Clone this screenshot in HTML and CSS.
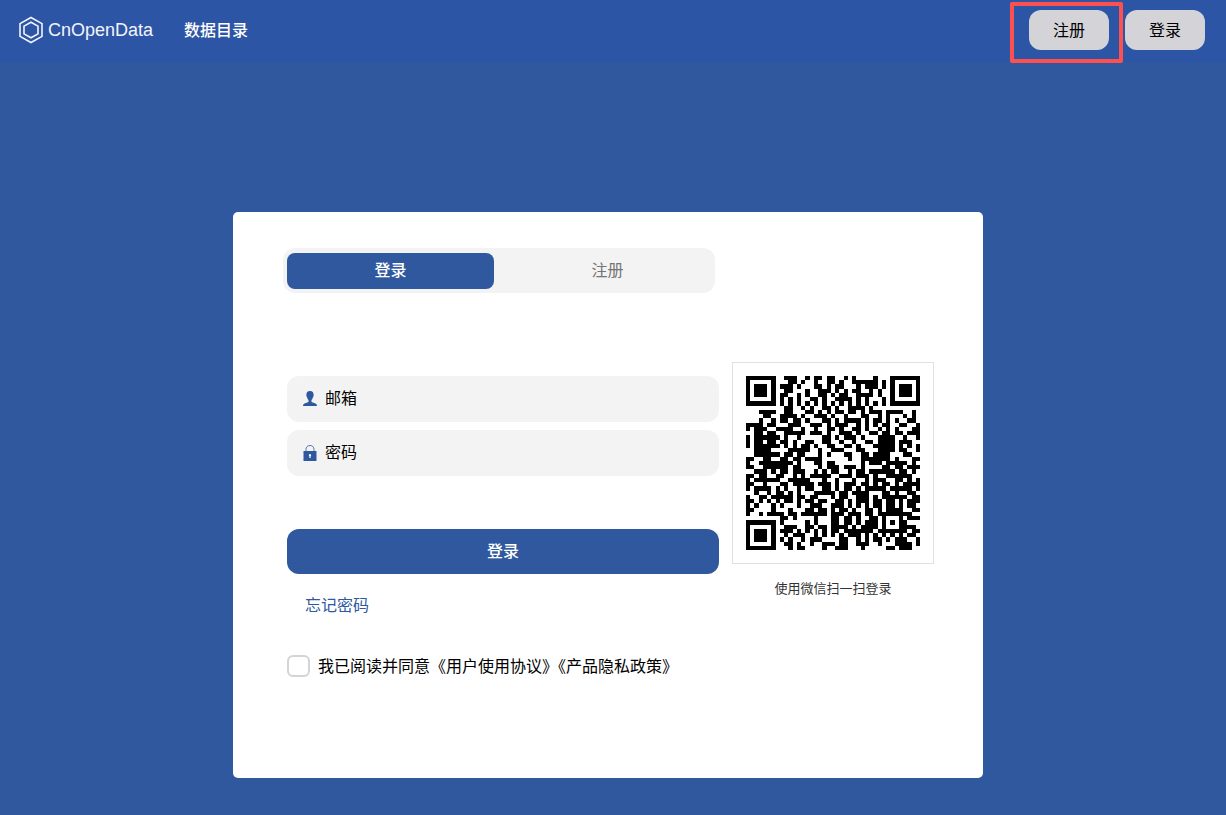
FILE: index.html
```html
<!DOCTYPE html>
<html lang="zh-CN">
<head>
<meta charset="utf-8">
<title>CnOpenData</title>
<link rel="stylesheet" href="styles.css">
</head>
<body>
<header class="topbar">
  <a class="logo" href="#">
    <svg class="logo-mark" viewBox="0 0 26 28" fill="none" stroke="#f1f4fa" stroke-width="1.6" aria-hidden="true">
      <path d="M13 1.5 24 7.6V20.4L13 26.5 2 20.4V7.6Z"/>
      <path d="M13 6.2 20 10.1V17.9L13 21.8 6 17.9V10.1Z"/>
    </svg>
    <span>CnOpenData</span>
  </a>
  <nav class="nav"><a href="#">数据目录</a></nav>
  <div class="actions">
    <div class="marked"><button class="pill" type="button">注册</button></div>
    <button class="pill" type="button">登录</button>
  </div>
</header>
<main class="page">
  <section class="card">
    <div class="tabs">
      <button class="tab tab-active" type="button">登录</button>
      <button class="tab" type="button">注册</button>
    </div>
    <div class="columns">
      <form class="form">
        <label class="field">
          <svg class="field-icon" viewBox="0 0 14 16" fill="#2f589f" aria-hidden="true"><path d="M7 0C4.5 0 3.3 1.600 3.400 4 3.200 4.600 3.500 5.700 4 6 4.300 7.500 5 8.600 5.500 9V11L1.500 12.500C.5 13 0 14 0 15H14C14 14 13.500 13 12.500 12.500L8.500 11V9C9 8.600 9.700 7.500 10 6 10.500 5.700 10.800 4.600 10.600 4 10.700 1.600 9.500 0 7 0Z"/></svg>
          <input type="text" placeholder="邮箱" aria-label="邮箱">
        </label>
        <label class="field">
          <svg class="field-icon" viewBox="0 0 14 16" aria-hidden="true"><path d="M3 7V4.500C3 2 4.500.5 7 .5S11 2 11 4.500V7" fill="none" stroke="#2f589f" stroke-width=".8"/><path d="M.5 6H13.500V16H.5Z" fill="#2f589f"/><path d="M7 9A1.200 1.200 0 0 1 7.600 11.200V13H6.400V11.200A1.200 1.200 0 0 1 7 9Z" fill="#fff"/></svg>
          <input type="password" placeholder="密码" aria-label="密码">
        </label>
        <button class="submit" type="button">登录</button>
        <a class="forgot" href="#">忘记密码</a>
        <label class="agree"><input type="checkbox"><span>我已阅读并同意《用户使用协议》《产品隐私政策》</span></label>
      </form>
      <aside class="scan">
        <div class="qr-frame"><svg class="qr" viewBox="0 0 41 41" shape-rendering="crispEdges" role="img" aria-label="微信登录二维码"><path id="modules" fill="#000"/></svg></div>
        <p class="caption">使用微信扫一扫登录</p>
      </aside>
    </div>
  </section>
</main>
<script src="qr.js"></script>
</body>
</html>
```
FILE: styles.css
```css
* {
  box-sizing: border-box;
}

body {
  margin: 0;
  min-height: 100vh;
  background: #2f589f;
  color: #000;
  font: 16px/24px "Noto Sans CJK SC", sans-serif;
}

button,
input {
  font: inherit;
}

button {
  border: 0;
  cursor: pointer;
}

a {
  text-decoration: none;
}

.topbar {
  display: flex;
  align-items: center;
  height: 62px;
  padding: 0 21px 2px 18px;
  background: #2d55a5;
}

.logo {
  display: flex;
  align-items: center;
  gap: 4px;
  color: #f1f4fa;
  font: 18px/28px "Liberation Sans Narrow", "Liberation Sans", sans-serif;
}

.logo-mark {
  width: 26px;
  height: 28px;
}

.nav {
  margin-left: 31px;
  padding-bottom: 2px;
}

.nav a {
  color: #fff;
  font-weight: 500;
}

.actions {
  display: flex;
  gap: 16px;
  margin-left: auto;
}

.marked {
  position: relative;
}

.marked::after {
  content: "";
  position: absolute;
  inset: -8px -14px -13px -19px;
  border: 4px solid #ff5050;
  border-radius: 2px;
  pointer-events: none;
}

.pill {
  width: 80px;
  height: 40px;
  padding: 0 0 2px;
  border-radius: 12px;
  background: #d3d3d8;
  color: #000;
}

.page {
  display: flex;
  justify-content: center;
  padding: 150px 10px 37px 0;
}

.card {
  width: 750px;
  padding: 36px 49px 99px 50px;
  border-radius: 5px;
  background: #fff;
}

.tabs {
  display: flex;
  gap: 10px;
  width: 432px;
  padding: 5px 4px 4px;
  border-radius: 12px;
  background: #f3f3f3;
}

.tab {
  flex: 1;
  height: 36px;
  padding: 0 0 4px;
  border-radius: 8px;
  background: none;
  color: #757575;
}

.tab-active {
  background: #2f589f;
  color: #fff;
  font-weight: 500;
}

.columns {
  display: flex;
  gap: 13px;
  padding: 69px 0 0 4px;
}

.form {
  display: flex;
  flex: 1;
  flex-direction: column;
  align-items: flex-start;
  padding-top: 14px;
}

.field {
  display: flex;
  align-items: center;
  gap: 8px;
  width: 100%;
  height: 46px;
  margin-bottom: 8px;
  padding: 0 16px;
  border-radius: 12px;
  background: #f3f3f3;
}

.field-icon {
  width: 14px;
  height: 16px;
}

.field input {
  flex: 1;
  min-width: 0;
  padding: 0 0 4px;
  border: 0;
  outline: 0;
  background: none;
}

.field input::placeholder {
  color: #000;
  opacity: 1;
}

.submit {
  width: 100%;
  height: 45px;
  margin-top: 45px;
  padding: 0 0 4px;
  border-radius: 12px;
  background: #2f589f;
  color: #fff;
  font-weight: 500;
}

.forgot {
  margin: 18px 0 0 18px;
  color: #2f589f;
}

.agree {
  display: flex;
  align-items: center;
  gap: 8px;
  margin-top: 37px;
  white-space: nowrap;
}

.agree span {
  padding-bottom: 2px;
}

.agree input {
  width: 23px;
  height: 22px;
  margin: 0;
  border: 2px solid #d3d3d8;
  border-radius: 6px;
  appearance: none;
  background: #fff;
}

.agree input:checked {
  background: #2f589f;
}

.scan {
  width: 202px;
}

.qr-frame {
  padding: 13px;
  border: 1px solid #e1e1e1;
}

.qr {
  display: block;
  width: 100%;
}

.caption {
  margin: 12px 0 0;
  color: #333;
  font-size: 13px;
  text-align: center;
}
```
FILE: qr.js
```js
const rows = [
  "#######..###..#.##.##..#.#....#..#######",
  "#.....#...##.#..#..##.#..######.##.#.....#",
  "#.###.#.###.#...##.#.##...#.###.#.#.###.#",
  "#.###.#..##...#..###.#.#.##..#.#..#.###.#",
  "#.###.#.##..#.#..##.#.##..####.#..#.###.#",
  "#.....#.#.#.#..##.#..####.#.#...#.#.....#",
  "#######.#.#.#.#.#.#.#.#.#.#.#.#.#.#######",
  ".........##..#.#..##.#..####.#...........",
  "...####..##...##.#.#.##.##.#.###.####..#.",
  "....##..####.#..###.#..#...##..#.#...#.#.",
  "...#..#.##.##.#...##.#.####.#.##.#.#..##.",
  "####.##...###..###.#.###..#.#.#.##..##..#",
  "#.###..####..#..#..##.#..##.#..#.#.#...##",
  "..##.##..#####.###.#..###.#..##.##.##.###",
  "#.######.#..#.....##.#.###.#...####..#..#",
  "#.##.##.##.#..##..##..#..#..##.####.###..",
  "#.######.#.#.##.#..##..##.#...#####.#.#.#",
  "..####....#####..#..###...##...####.##..#",
  "..######.##.##...#.#...##..##.####...##..",
  "##..##..##.##.####......#..#######.#...##",
  "#..########.#...##.##......#.###.#####.#.",
  "##..######.##....#.###.###.#....##.##.###",
  "..###.#.##.###..#.#.##..#.##.######.##.#.",
  "##.##..##..#.#.#####..###.###.#..######..",
  "#.######..#####...#..#...#..#.###..##.#.#",
  "##..#...##.#####.###.#.###.##.#.##.#.####",
  "#.####.#.#..#.##..##.#.##.#.#####.#####.#",
  "..#..#.##.#.#...#####.##.####...##.#..##.",
  "#..##.#####.##.##...#.##..###.#.######.##",
  "##.#.#.#.##.#.##.##..##.#.###.##.##.#.###",
  "#.#...#.#...#..###..###.#.#.#.##.##.#.##.",
  "##....#...#...##.##.#.##.#..##.#.####..##",
  "#..#.####.##.######.###.###.##.##.##.##..",
  "........##.#....#...##.##.#..##.#...#.###",
  "#######.#.....#.#...##.##.#.###.#.#.##..",
  "#.....#..###..##.##.####.#.####.#...####.",
  "#.###.#.###.#.#.#.#.##.#######.#######.##",
  "#.###.#..#.###..#.#.#.#.###.#.#.#.#.#.##.",
  "#.###.#.#.#..#.###....##..#.#.##.#.###..#",
  "#.....#..##.#..#..###.##..###..#...####.#",
  "#######...#.##....#..###...#.....##.###.."
];
const grid = rows.map(row => row.slice(0, 41).padEnd(41, ".").split("").map(c => c === "#"));

// Square ring pattern around a centre module.
function ring(cx, cy, size, filled) {
  for (let y = -size; y <= size; y++) {
    for (let x = -size; x <= size; x++) {
      const row = grid[cy + y];
      if (!row || cx + x < 0 || cx + x > 40) continue;
      row[cx + x] = filled(Math.max(Math.abs(x), Math.abs(y)));
    }
  }
}

[[3, 3], [37, 3], [3, 37]].forEach(([x, y]) => ring(x, y, 4, d => d < 2 || d === 3));
ring(34, 34, 2, d => d !== 1);

let path = "";
grid.forEach((row, y) => row.forEach((on, x) => {
  if (on) path += `M${x} ${y}h1v1h-1z`;
}));
document.getElementById("modules").setAttribute("d", path);
```
